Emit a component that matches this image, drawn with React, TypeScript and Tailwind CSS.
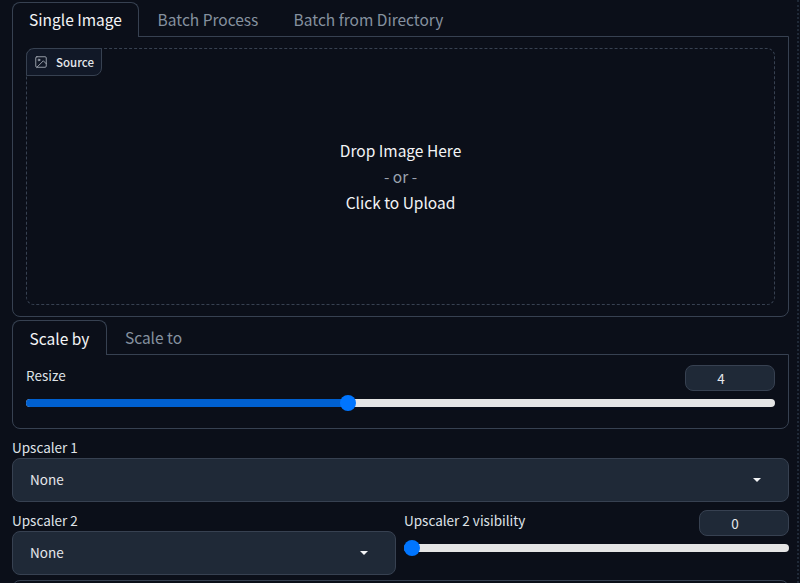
const font = { fontFamily: '"Noto Sans CJK SC", "Noto Sans", sans-serif' };

const Caret = () => (
  <svg width="8" height="4" viewBox="0 0 8 4" className="text-[#f3f4f6]">
    <path d="M0 0h8L4 4z" fill="currentColor" />
  </svg>
);

const ImageIcon = () => (
  <svg width="14" height="14" viewBox="0 0 24 24" fill="none" stroke="#a8aeb8" strokeWidth="1.5" strokeLinecap="round" strokeLinejoin="round">
    <rect x="3" y="3" width="18" height="18" rx="2" />
    <circle cx="8.5" cy="8.5" r="1.5" />
    <path d="M21 15l-5-5L5 21" />
  </svg>
);

const Slider = ({ pct }: { pct: number }) => {
  const left = `calc(${pct}% - ${pct * 0.16}px)`;
  return (
    <div className="relative h-[8px] rounded-full bg-[#e5e5e5]">
      <div className="h-full rounded-full bg-[#0060d0]" style={{ width: `calc(${pct}% - ${pct * 0.16}px + 8px)` }} />
      <div className="absolute top-1/2 size-4 -translate-y-1/2 rounded-full bg-[#0075ff]" style={{ left }} />
    </div>
  );
};

const Tab = ({ label, active, width }: { label: string; active?: boolean; width: string }) =>
  active ? (
    <div className={`${width} relative -mb-px flex h-[35px] items-center justify-center rounded-t-lg border border-b-0 border-[#374151] bg-[#0b0f19] text-[15.5px] text-[#f3f4f6]`}>
      {label}
    </div>
  ) : (
    <div className={`${width} flex h-[34px] items-center justify-center pt-[2px] text-[15.5px] text-[#85919f]`}>{label}</div>
  );

const Select = () => (
  <div className="flex h-[44px] items-center justify-between rounded-lg border border-[#374151] bg-[#1f2937] pb-px pl-[17px] pr-[27px] text-[13.5px] text-[#e5e7eb]">
    None
    <Caret />
  </div>
);

const NumberBox = ({ value }: { value: string }) => (
  <div className="flex h-[26px] w-[90px] items-center justify-center rounded-lg border border-[#374151] bg-[#1f2937] pr-[18px] text-[13.5px] text-[#e5e7eb]">
    {value}
  </div>
);

export default function App() {
  return (
    <div className="bg-[#0b0f19] pr-px">
      <div className="h-[583px] overflow-hidden border-r-2 border-dotted border-[#1f2937] pl-3 pr-[8px] pt-[2px]" style={font}>
        <div className="flex">
          <Tab label="Single Image" active width="w-[127px]" />
          <Tab label="Batch Process" width="w-[138px]" />
          <Tab label="Batch from Directory" width="w-[183px]" />
          <div className="flex-1" />
        </div>
        <div className="h-[281px] rounded-b-lg border border-[#374151] px-[13px] py-[11px]">
          <div className="relative flex h-full flex-col items-center justify-center rounded-lg border border-dashed border-[#374151] pb-[2px] text-[15.5px] leading-[26px] text-[#f3f4f6]">
            <div className="absolute -left-px -top-px flex h-[28px] items-center gap-[8px] rounded-br-lg rounded-tl-lg border border-[#374151] bg-[#111827] px-[7px] text-[11.5px] font-medium text-[#e5e7eb]">
              <ImageIcon />
              Source
            </div>
            <span>Drop Image Here</span>
            <span className="text-[#9ca3af]">- or -</span>
            <span>Click to Upload</span>
          </div>
        </div>
        <div className="mt-[3px] flex">
          <Tab label="Scale by" active width="w-[95px] pt-px" />
          <Tab label="Scale to" width="w-[93px]" />
        </div>
        <div className="h-[75px] rounded-b-lg border border-[#374151] px-[13px] pt-[10px]">
          <div className="flex items-start justify-between">
            <span className="text-[13.5px] leading-[20px] text-[#dfe2e7]">Resize</span>
            <NumberBox value="4" />
          </div>
          <div className="mt-[8px]">
            <Slider pct={42.8} />
          </div>
        </div>
        <div className="mt-[8px] text-[13.5px] leading-[20px] text-[#dfe2e7]">Upscaler 1</div>
        <div className="mt-[1px]">
          <Select />
        </div>
        <div className="mt-[8px] flex gap-[8px]">
          <div className="w-[384px]">
            <div className="text-[13.5px] leading-[20px] text-[#dfe2e7]">Upscaler 2</div>
            <div className="mt-[1px]">
              <Select />
            </div>
          </div>
          <div className="flex-1">
            <div className="flex items-start justify-between">
              <span className="text-[13.5px] leading-[20px] text-[#dfe2e7]">Upscaler 2 visibility</span>
              <NumberBox value="0" />
            </div>
            <div className="mt-[8px]">
              <Slider pct={0} />
            </div>
          </div>
        </div>
        <div className="mt-[5px] h-8 rounded-t-lg border border-[#374151]" />
      </div>
    </div>
  );
}
